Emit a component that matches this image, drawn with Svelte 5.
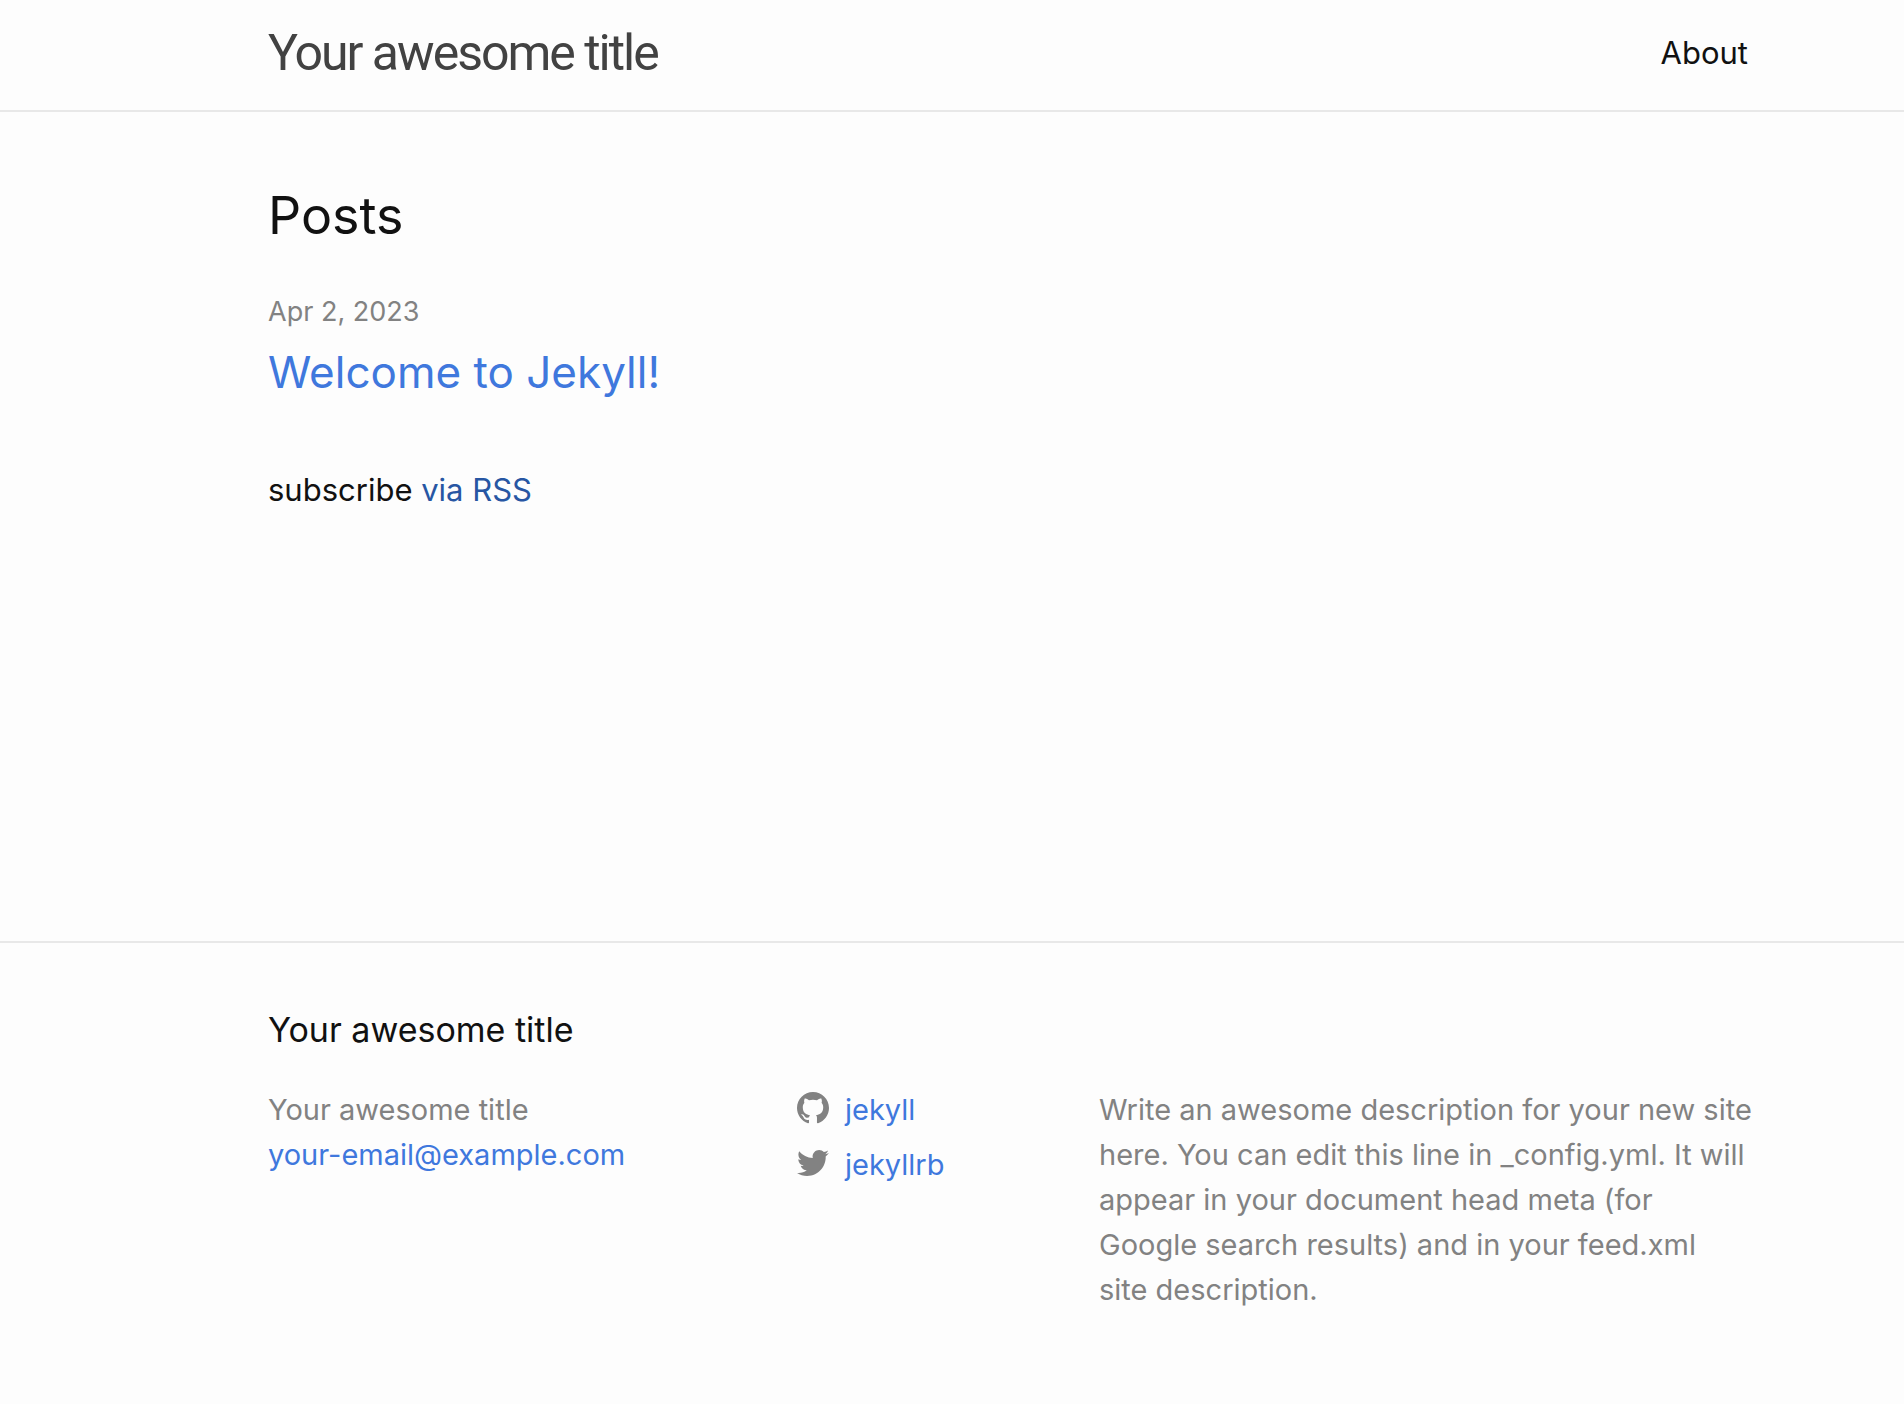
<script>
  const siteTitle = 'Your awesome title';
  const posts = [{ date: 'Apr 2, 2023', title: 'Welcome to Jekyll!' }];
</script>

<div class="page">
  <header class="site-header">
    <div class="wrapper header-row">
      <a class="site-title" href="#home">{siteTitle}</a>
      <nav><a class="page-link" href="#about">About</a></nav>
    </div>
  </header>

  <main class="page-content">
    <div class="wrapper">
      <h2 class="post-list-heading">Posts</h2>
      <ul class="post-list">
        {#each posts as post}
          <li>
            <span class="post-meta">{post.date}</span>
            <h3><a class="post-link" href="#post">{post.title}</a></h3>
          </li>
        {/each}
      </ul>
      <p class="subscribe">subscribe <a href="#feed">via RSS</a></p>
    </div>
  </main>

  <footer class="site-footer">
    <div class="wrapper">
      <h2 class="footer-heading">{siteTitle}</h2>
      <div class="footer-cols">
        <ul class="contact">
          <li>{siteTitle}</li>
          <li><a href="mailto:your-email@example.com">your-email@example.com</a></li>
        </ul>
        <ul class="social">
          <li>
            <a href="#github">
              <svg viewBox="0 0 16 16" aria-hidden="true"><path fill-rule="evenodd" d="M8 0C3.58 0 0 3.582 0 8c0 3.535 2.292 6.533 5.47 7.59.4.075.547-.172.547-.385 0-.19-.007-.693-.01-1.36-2.226.483-2.695-1.073-2.695-1.073-.364-.924-.89-1.17-.89-1.17-.725-.496.056-.486.056-.486.803.056 1.225.824 1.225.824.714 1.223 1.873.87 2.33.665.072-.517.278-.87.507-1.07-1.777-.2-3.644-.888-3.644-3.953 0-.873.31-1.587.823-2.147-.083-.202-.358-1.015.077-2.117 0 0 .672-.215 2.2.82.638-.178 1.323-.266 2.003-.27.68.004 1.364.092 2.003.27 1.527-1.035 2.198-.82 2.198-.82.437 1.102.163 1.915.08 2.117.513.56.823 1.274.823 2.147 0 3.073-1.87 3.75-3.653 3.947.287.246.543.735.543 1.48 0 1.07-.01 1.933-.01 2.195 0 .215.144.463.55.385C13.71 14.53 16 11.534 16 8c0-4.418-3.582-8-8-8"/></svg>
              <span>jekyll</span>
            </a>
          </li>
          <li>
            <a href="#twitter">
              <svg viewBox="0 0 16 16" aria-hidden="true"><path d="M15.969 3.058c-.586.26-1.217.436-1.878.515.675-.405 1.194-1.045 1.438-1.809-.632.375-1.332.647-2.076.793-.596-.636-1.446-1.033-2.387-1.033-1.806 0-3.27 1.464-3.27 3.27 0 .256.029.506.085.745C5.163 5.404 2.753 4.102 1.14 2.124c-.281.482-.442 1.044-.442 1.644 0 1.134.577 2.135 1.455 2.722-.536-.017-1.04-.164-1.481-.409v.041c0 1.584 1.127 2.906 2.623 3.206-.274.075-.563.115-.861.115-.211 0-.416-.021-.615-.059.416 1.299 1.624 2.245 3.055 2.271-1.119.877-2.529 1.4-4.061 1.4-.264 0-.524-.015-.78-.046 1.447.928 3.166 1.469 5.013 1.469 6.015 0 9.304-4.983 9.304-9.304 0-.142-.003-.283-.009-.423.639-.461 1.193-1.037 1.628-1.693z"/></svg>
              <span>jekyllrb</span>
            </a>
          </li>
        </ul>
        <p class="description">Write an awesome description for your new site here. You can edit this line in _config.yml. It will appear in your document head meta (for Google search results) and in your feed.xml<br />site description.</p>
      </div>
    </div>
  </footer>
</div>

<style>
  :global(body) {
    margin: 0;
    background: #fdfdfd;
    color: #111;
    font: 400 31px/48px Inter, 'Liberation Sans', sans-serif;
  }
  h2, h3, p, ul {
    margin: 0;
    padding: 0;
    font-weight: 400;
  }
  ul {
    list-style: none;
  }
  a {
    color: #3f78dd;
    text-decoration: none;
  }
  a:hover {
    text-decoration: underline;
  }
  .page {
    display: flex;
    flex-direction: column;
    min-height: 100vh;
  }
  .wrapper {
    max-width: 1480px;
    margin: 0 auto;
  }
  .site-header, .page-content, .site-footer {
    padding-left: 112px;
  }
  .site-header {
    padding-bottom: 4px;
    border-bottom: 2px solid #e8e8e8;
  }
  .header-row {
    display: flex;
    justify-content: space-between;
    line-height: 106px;
  }
  .site-title {
    color: #424242;
    font-family: Roboto, sans-serif;
    font-size: 50px;
    font-weight: 400;
    letter-spacing: -2px;
  }
  .page-link {
    color: #111;
  }
  .page-content {
    flex: 1;
    padding-top: 62px;
    padding-bottom: 60px;
  }
  .post-list-heading {
    margin-bottom: 30px;
    font-size: 52px;
    line-height: 84px;
  }
  .post-list li {
    margin-bottom: 58px;
  }
  .post-meta {
    display: block;
    color: #828282;
    font-size: 27px;
  }
  h3 {
    font-size: 44px;
    line-height: 72px;
  }
  .subscribe a {
    color: #2756a3;
  }
  .site-footer {
    padding-top: 60px;
    padding-bottom: 92px;
    border-top: 2px solid #e8e8e8;
  }
  .footer-heading {
    margin-bottom: 30px;
    font-size: 34px;
    line-height: 54px;
  }
  .footer-cols {
    display: grid;
    grid-template-columns: 499fr 272fr 655fr;
    column-gap: 30px;
    margin-right: -6px;
    color: #828282;
    font-size: 29px;
    line-height: 45px;
  }
  .social {
    display: flex;
    flex-direction: column;
    gap: 10px;
  }
  .social a {
    display: flex;
    gap: 16px;
  }
  svg {
    width: 32px;
    height: 32px;
    margin-top: 5px;
    fill: #828282;
  }
</style>
